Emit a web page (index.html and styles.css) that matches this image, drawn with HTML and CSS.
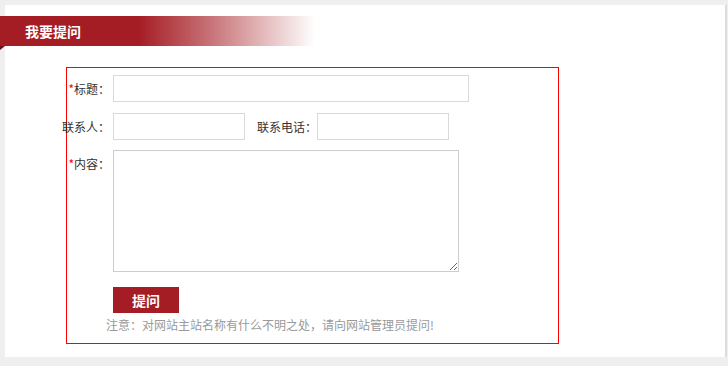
FILE: index.html
```html
<!DOCTYPE html>
<html lang="zh-CN">
<head>
  <meta charset="UTF-8" />
  <title>我要提问</title>
  <link rel="stylesheet" href="styles.css">
</head>
<body>
  <div class="page">
    <div class="title-bar"><span>我要提问</span></div>
    <div class="title-corner"></div>

    <form class="ask-box">
      <div class="row">
        <label class="lbl"><i>*</i>标题：</label>
        <input type="text" class="ipt ipt-title">
      </div>
      <div class="row">
        <label class="lbl">联系人：</label>
        <input type="text" class="ipt ipt-short">
        <label class="lbl-inline">联系电话：</label>
        <input type="text" class="ipt ipt-short">
      </div>
      <div class="row">
        <label class="lbl"><i>*</i>内容：</label>
        <textarea class="txt"></textarea>
      </div>
      <div class="btn-row">
        <button type="button" class="btn">提问</button>
      </div>
      <p class="note">注意：对网站主站名称有什么不明之处，请向网站管理员提问!</p>
    </form>
  </div>
</body>
</html>
```

FILE: styles.css
```css
body {
  margin: 0;
  background: #efefef;
  font-family: "Noto Sans CJK SC", "Liberation Sans", sans-serif;
  font-size: 12px;
  color: #333;
}
.page {
  margin: 5px 3px 9px 5px;
  height: 352px;
  background: #fff;
  box-shadow: 2px 0 0 #dcdcdc;
  padding-top: 11px;
  box-sizing: border-box;
}
.title-bar {
  margin-left: -5px;
  width: 315px;
  height: 30px;
  background: linear-gradient(to right, #a51d24 0, #a51d24 44%, rgba(165, 29, 36, 0.6) 68%, rgba(165, 29, 36, 0) 100%);
  color: #fff;
  font-size: 14px;
  font-weight: bold;
  line-height: 30px;
}
.title-bar span {
  padding-left: 25px;
}
.title-corner {
  margin-left: -5px;
  width: 0;
  height: 0;
  border-top: 4px solid #6e1015;
  border-right: 5px solid transparent;
}
.ask-box {
  margin: 17px 0 0 61px;
  width: 491px;
  height: 268px;
  border: 1px solid #f00;
  padding: 7px 0 0;
  box-sizing: content-box;
}
.row {
  display: flex;
  align-items: flex-start;
  margin-bottom: 11px;
}
.row:nth-child(3) {
  margin-top: -1px;
}
.lbl {
  width: 43px;
  margin-right: 3px;
  flex-shrink: 0;
  display: flex;
  justify-content: flex-end;
  white-space: nowrap;
  line-height: 27px;
}
.lbl i {
  font-style: normal;
  color: #f00;
}
.lbl-inline {
  margin: 0 0 0 12px;
  line-height: 27px;
  white-space: nowrap;
}
.ipt {
  height: 27px;
  border: 1px solid #d9d9d9;
  box-sizing: border-box;
  padding: 0 4px;
  margin: 0;
}
.ipt-title {
  width: 356px;
}
.ipt-short {
  width: 132px;
}
.txt {
  width: 346px;
  height: 122px;
  border: 1px solid #cdcdcd;
  box-sizing: border-box;
  margin: 0;
  font-family: inherit;
}
.btn-row {
  padding: 4px 0 0 46px;
}
.btn {
  width: 66px;
  height: 26px;
  border: 0;
  background: #a51d24;
  color: #fff;
  font-family: inherit;
  font-size: 14px;
  font-weight: bold;
  padding: 0;
  display: block;
}
.note {
  margin: 3px 0 0 39px;
  color: #999;
  line-height: 18px;
}
```
